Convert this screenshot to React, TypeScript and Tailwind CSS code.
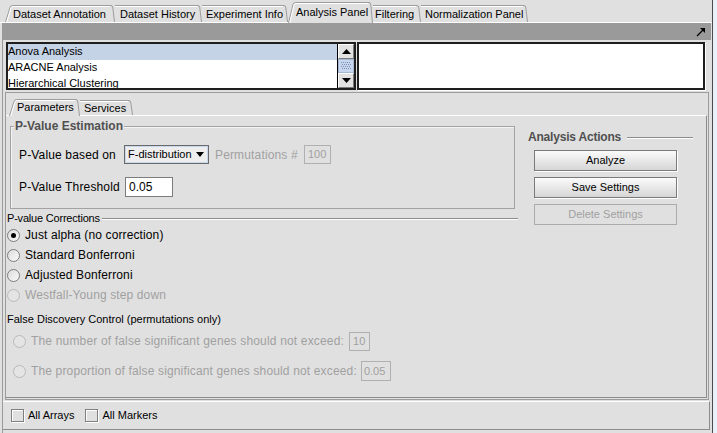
import React from "react";

function EdgeLeft({ h }: { h: number }) {
  return (
    <svg width="8" height={h} className="shrink-0 block">
      <path d={`M0.5 ${h} L5 2.5 Q5.6 0.5 7.5 0.5 L8 0.5`} fill="none" stroke="#9c9c9c" />
      <path d={`M1.8 ${h} L6 3 Q6.6 1.5 8 1.5`} fill="none" stroke="#ffffff" />
    </svg>
  );
}

function EdgeRight({ h }: { h: number }) {
  return (
    <svg width="5" height={h} className="shrink-0 block">
      <path d={`M0 0.5 L1 0.5 Q2.3 0.5 2.7 2 L4.5 ${h}`} fill="none" stroke="#9c9c9c" />
    </svg>
  );
}

function Tab({
  label,
  box,
  pad,
  h,
  left,
}: {
  label: string;
  box: string;
  pad: string;
  h: number;
  left?: boolean;
}) {
  return (
    <div className={`flex shrink-0 ${box}`}>
      {left && <EdgeLeft h={h} />}
      <div
        className={`flex-1 border-t border-[#9c9c9c] shadow-[inset_0_1px_0_#ffffff] flex items-center whitespace-nowrap text-[11px] leading-none ${pad}`}
      >
        {label}
      </div>
      <EdgeRight h={h} />
    </div>
  );
}

function Radio({ checked, disabled }: { checked?: boolean; disabled?: boolean }) {
  return (
    <span
      className={
        disabled
          ? "w-[13px] h-[13px] rounded-full border border-[#b9b9b9] bg-[#e4e4e4] shrink-0 flex items-center justify-center"
          : "w-[13px] h-[13px] rounded-full border border-[#7c7c7c] bg-gradient-to-br from-[#dcdcdc] to-[#fafafa] shrink-0 flex items-center justify-center"
      }
    >
      {checked && <span className="w-[5px] h-[5px] rounded-full bg-black" />}
    </span>
  );
}

function Check() {
  return (
    <span className="block w-[13px] h-[13px] border border-[#7f7f7f] bg-[#e0e0e0] shadow-[inset_1px_1px_0_#ffffff,1px_1px_0_#ffffff] shrink-0" />
  );
}

function ScrollBtn({ up }: { up?: boolean }) {
  return (
    <div className="h-[15px] w-[16px] bg-[#e2e2e2] border-t border-l border-white border-r border-b border-r-[#7a7a7a] border-b-[#7a7a7a] flex items-center justify-center">
      <svg width="9" height="5">
        {up ? <path d="M0 5 L4.5 0 L9 5 Z" fill="#000" /> : <path d="M0 0 L4.5 5 L9 0 Z" fill="#000" />}
      </svg>
    </div>
  );
}

export default function App() {
  return (
    <div className="w-[717px] h-[433px] bg-[#eaf0f7] flex overflow-hidden text-black font-['Liberation_Sans',Arial,sans-serif]">
      <div className="w-[713px] h-full bg-[#e0e0e0] border-r border-[#4a4a4a] flex flex-col">
        {/* main tabs */}
        <div className="h-[23px] border-b border-white flex items-end pl-[5px] shrink-0">
          <Tab label="Dataset Annotation" box="w-[110px] h-[17px]" pad="" h={17} left />
          <Tab label="Dataset History" box="w-[87px] h-[17px]" pad="pl-[5px]" h={17} />
          <Tab label="Experiment Info" box="w-[86px] h-[17px]" pad="pl-[4px]" h={17} />
          <Tab label="Analysis Panel" box="w-[85px] h-[21px] -mb-px bg-[#e0e0e0] relative" pad="pb-[1px]" h={21} left />
          <Tab label="Filtering" box="w-[48px] h-[17px]" pad="pl-[2px]" h={17} />
          <Tab label="Normalization Panel" box="w-[106px] h-[17px]" pad="pl-[4px]" h={17} />
        </div>

        <div className="flex-1 flex flex-col ml-[2px] border-l border-[#9a9a9a]">
          {/* gray title bar */}
          <div className="h-[17px] w-[708px] bg-[#9a9a9a] flex items-center justify-end pr-[5px] shrink-0">
            <svg width="10" height="10">
              <path d="M1 9 L8 2" stroke="#000" strokeWidth="1.2" />
              <path d="M4 1 L9 1 L9 6 Z" fill="#000" />
            </svg>
          </div>

          {/* lists */}
          <div className="mt-[2px] h-[48px] flex pl-[3px] shrink-0">
            <div className="w-[350px] h-full border-2 border-[#1e1e1e] flex bg-white">
              <div className="flex-1 border-r border-black text-[11px] leading-[15px] overflow-hidden">
                <div className="h-[16px] bg-[#c4d3e6]">Anova Analysis</div>
                <div className="h-[16px]">ARACNE Analysis</div>
                <div className="h-[16px]">Hierarchical Clustering</div>
              </div>
              <div className="w-[16px] flex flex-col bg-[#e0e0e0]">
                <ScrollBtn up />
                <div className="h-[14px] w-[16px] bg-[#c6d6ee] border border-[#a6b8d4] flex items-center justify-center">
                  <svg width="10" height="8">
                    {[0, 1, 2, 3].map((r) =>
                      [0, 1, 2, 3, 4].map((c) => (
                        <rect key={`${r}-${c}`} x={c * 2 + (r % 2)} y={r * 2} width="1" height="1" fill="#7d8fae" />
                      ))
                    )}
                  </svg>
                </div>
                <ScrollBtn />
              </div>
            </div>
            <div className="ml-[1px] w-[348px] h-full border-2 border-[#1e1e1e] bg-white shadow-[1px_1px_0_#ffffff]" />
          </div>

          {/* parameters tabbed pane */}
          <div className="mt-[2px] ml-[2px] w-[704px] h-[308px] border border-[#9c9c9c] flex flex-col shrink-0">
            <div className="h-[22px] flex items-end pl-[3px] shrink-0">
              <Tab label="Parameters" box="w-[71px] h-[17px] -mb-px bg-[#e0e0e0] relative" pad="pb-[1px]" h={17} left />
              <Tab label="Services" box="w-[53px] h-[15px]" pad="pl-[4px]" h={15} />
            </div>
            <div className="h-[283px] mr-[1px] border-t border-white border-b border-b-[#8c8c8c] border-r border-r-[#8c8c8c] flex">
              {/* left column */}
              <div className="w-[512px] pl-[1px] pt-[10px] flex flex-col">
                <div className="ml-[3px] w-[505px] h-[83px] border border-[#a2a2a2] shadow-[inset_1px_1px_0_#f4f4f4] relative pt-[18px] pl-[8px]">
                  <div className="absolute -top-[8px] left-[3px] px-[1px] bg-[#e0e0e0] text-[12px] leading-[14px] font-bold text-[#505050] whitespace-nowrap">
                    P-Value Estimation
                  </div>
                  <div className="h-[19px] flex items-center text-[12px] tracking-[0.15px]">
                    <span className="w-[105px] shrink-0 whitespace-nowrap">P-Value based on</span>
                    <div className="w-[85px] h-[19px] border border-[#6a6a6a] bg-[#eeeeee] shadow-[inset_0_0_0_1px_#c9d7ec] flex items-center pl-[3px] pr-[4px] justify-between tracking-normal">
                      <span className="text-[11px] leading-none whitespace-nowrap">F-distribution</span>
                      <svg width="8" height="5" className="shrink-0">
                        <path d="M0 0 L4 5 L8 0 Z" fill="#000" />
                      </svg>
                    </div>
                    <span className="ml-[6px] w-[89px] shrink-0 text-[#a0a0a0] whitespace-nowrap">Permutations #</span>
                    <div className="w-[27px] h-[19px] border border-[#b0b0b0] text-[11px] text-[#a0a0a0] flex items-center pl-[3px] tracking-normal">100</div>
                  </div>
                  <div className="mt-[13px] h-[20px] flex items-center text-[12px] tracking-[0.15px]">
                    <span className="w-[106px] shrink-0 whitespace-nowrap">P-Value Threshold</span>
                    <div className="w-[48px] h-[20px] border border-[#7c7c7c] bg-white flex items-center pl-[3px] text-[12px] tracking-normal">0.05</div>
                  </div>
                </div>

                <div className="mt-[3px] h-[12px] flex items-center text-[11px] leading-[12px] tracking-[-0.2px]">
                  <span className="whitespace-nowrap">P-value Corrections</span>
                  <div className="flex-1 ml-[2px] border-t border-[#8c8c8c] shadow-[0_1px_0_#ffffff]" />
                </div>

                <div className="mt-[1px] flex flex-col text-[12px] tracking-[0.12px]">
                  <div className="h-[20px] flex items-center gap-[5px]">
                    <Radio checked />
                    <span>Just alpha (no correction)</span>
                  </div>
                  <div className="h-[20px] flex items-center gap-[5px]">
                    <Radio />
                    <span>Standard Bonferroni</span>
                  </div>
                  <div className="h-[20px] flex items-center gap-[5px]">
                    <Radio />
                    <span>Adjusted Bonferroni</span>
                  </div>
                  <div className="h-[20px] flex items-center gap-[5px] text-[#a0a0a0]">
                    <Radio disabled />
                    <span>Westfall-Young step down</span>
                  </div>
                </div>

                <div className="mt-[8px] h-[12px] flex items-center text-[11px] leading-[12px] whitespace-nowrap">
                  False Discovery Control (permutations only)
                </div>

                <div className="mt-[6px] h-[20px] pl-[6px] flex items-center text-[12px] text-[#a0a0a0] whitespace-nowrap">
                  <Radio disabled />
                  <span className="ml-[5px] tracking-[0.17px]">The number of false significant genes should not exceed:</span>
                  <div className="ml-[5px] w-[21px] h-[19px] border border-[#b0b0b0] flex items-center pl-[3px] text-[11px]">10</div>
                </div>
                <div className="mt-[10px] h-[20px] pl-[6px] flex items-center text-[12px] text-[#a0a0a0] whitespace-nowrap">
                  <Radio disabled />
                  <span className="ml-[5px] tracking-[0.15px]">The proportion of false significant genes should not exceed:</span>
                  <div className="ml-[4px] w-[30px] h-[20px] border border-[#b0b0b0] flex items-center pl-[2px] text-[11px]">0.05</div>
                </div>
              </div>

              {/* right column */}
              <div className="ml-[10px] pt-[15px] flex flex-col">
                <div className="h-[12px] flex items-center">
                  <span className="w-[99px] shrink-0 text-[12px] leading-[12px] font-bold text-[#505050] whitespace-nowrap tracking-[-0.2px]">Analysis Actions</span>
                  <div className="w-[66px] border-t border-[#8c8c8c] shadow-[0_1px_0_#ffffff]" />
                </div>
                <div className="ml-[6px] mt-[7px] flex flex-col gap-[6px] text-[11px]">
                  <div className="w-[143px] h-[21px] border border-[#7a7a7a] bg-gradient-to-b from-[#fbfbfb] to-[#d6d6d6] shadow-[1px_1px_0_#ffffff] flex items-center justify-center">
                    Analyze
                  </div>
                  <div className="w-[143px] h-[21px] border border-[#7a7a7a] bg-gradient-to-b from-[#fbfbfb] to-[#d6d6d6] shadow-[1px_1px_0_#ffffff] flex items-center justify-center">
                    Save Settings
                  </div>
                  <div className="w-[143px] h-[21px] border border-[#ababab] bg-[#e0e0e0] text-[#a0a0a0] flex items-center justify-center">
                    Delete Settings
                  </div>
                </div>
              </div>
            </div>
          </div>

          {/* bottom bar */}
          <div className="mt-[1px] w-[707px] h-[29px] border-t border-white border-b border-r border-b-[#8c8c8c] border-r-[#8c8c8c] flex items-center pl-[8px] text-[11px] shrink-0">
            <Check />
            <span className="ml-[4px]">All Arrays</span>
            <span className="ml-[11px]">
              <Check />
            </span>
            <span className="ml-[4px]">All Markers</span>
          </div>
        </div>
      </div>
    </div>
  );
}
